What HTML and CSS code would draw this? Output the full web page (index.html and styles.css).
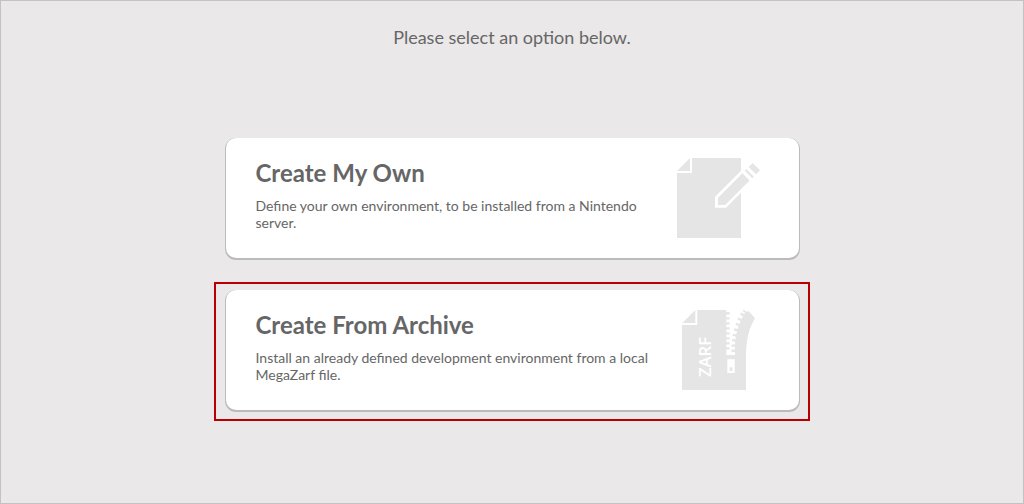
FILE: index.html
```html
<!DOCTYPE html>
<html lang="en">
<head>
<meta charset="utf-8">
<title>Create environment</title>
<link rel="stylesheet" href="styles.css">
</head>
<body>
<main class="page">
  <h1 class="prompt">Please select an option below.</h1>
  <div class="options">
    <section class="option">
      <div class="card">
        <div class="copy">
          <h2 class="title">Create My Own</h2>
          <p class="text">Define your own environment, to be installed from a Nintendo server.</p>
        </div>
        <svg class="icon" viewBox="0 0 100 95" aria-hidden="true">
          <path class="ink" d="M22 8H71V88H7V23H22Z"/>
          <path class="ink" d="M7 21L20 8V21Z"/>
          <path class="paper" d="M45 46.8L76 15.8L87 26.8L56 57.8H45Z"/>
          <path class="ink" d="M48 47.8L72.4 23.2L79.6 30.4L55.2 55H48Z"/>
          <path class="ink" d="M74.6 20.6L76.2 19L83.8 26.6L82.2 28.2Z"/>
          <path class="ink" d="M78.6 17L82.7 12.9L90 20.2L85.9 24.3Z"/>
        </svg>
      </div>
    </section>
    <section class="option selected">
      <div class="card">
        <div class="copy">
          <h2 class="title">Create From Archive</h2>
          <p class="text">Install an already defined development environment from a local MegaZarf file.</p>
        </div>
        <svg class="icon" viewBox="0 0 100 95" aria-hidden="true">
          <path class="ink" d="M27.3 10H56.3V12H59.6V14.5H56.3V17.2H59.6V19.5H56.3V22.2H59.6V24.5H56.3V27.2H59.6V29.5H56.3V32.2H59.6V34.5H56.3V37.2H59.6V39.5H56.3V42.2H59.6V44.5H56.3V47.2H59.6V49.5H56.3V55H65V52H61.5V49.6H65V46.8H61.5V44.4H65V41.6H62V39.2H65.6V36.5L62.5 36.1L62.9 33.7L66.3 34.2L67 31.3L63.7 30.6L64.3 28.2L67.6 29L68.5 26.1L65.4 25.1L66.2 22.8L69.4 23.9L70.6 21.1L67.5 19.7L68.5 17.5L71.6 18.9L72.9 16.3L70 14.5L71.3 12.4L74.2 14.2L75.2 12.7L72.5 11L73.6 9.8L77 12L78.5 11L85 18.3C79.5 27 76 39 76 57V90H12V25H27.3Z"/>
          <path class="ink" d="M12.3 23L25.3 10V23Z"/>
          <path class="paper" fill-rule="evenodd" d="M57.3 59.3H64.7V73H57.3ZM59.7 67.3V71H62.3V67.3Z"/>
          <text class="label" transform="translate(41 77) rotate(-90)" textLength="40" lengthAdjust="spacingAndGlyphs">ZARF</text>
        </svg>
      </div>
    </section>
  </div>
</main>
</body>
</html>
```
FILE: styles.css
```css
* { box-sizing: border-box; }
body { margin: 0; font-family: Lato, "Open Sans", sans-serif; color: #666; }
.page {
  height: 504px;
  padding-top: 24px;
  background: #eae8e9;
  border: 1px solid #c4c2c3;
  display: flex;
  flex-direction: column;
  align-items: center;
}
.prompt { margin: 0; font-size: 18px; line-height: 24px; font-weight: 400; }
.options { margin-top: 81px; width: 596px; display: grid; gap: 13px; }
.option { height: 139px; padding: 6px 9px 6px 10px; border: 2px solid transparent; }
.selected { border-color: #b80000; }
.card {
  width: 573px;
  height: 120px;
  display: flex;
  justify-content: space-between;
  background: #fff;
  border-radius: 10px;
  box-shadow: 0 1px 0 1px #bbb;
  clip-path: inset(0 -2px -3px -2px);
}
.copy { padding: 20px 0 0 29.5px; width: 430px; }
.title { margin: 0; font-size: 24px; line-height: 30px; font-weight: 700; }
.text { margin: 9px 0 0; font-size: 14px; line-height: 17px; }
.icon { width: 100px; height: 95px; margin: 12px 29px 0 0; flex: none; }
.selected .icon { margin-top: 10px; }
.ink { fill: #e5e5e5; }
.paper { fill: #fff; }
.label { fill: #fff; font: 600 16px "Open Sans", "Noto Sans", sans-serif; }
```
